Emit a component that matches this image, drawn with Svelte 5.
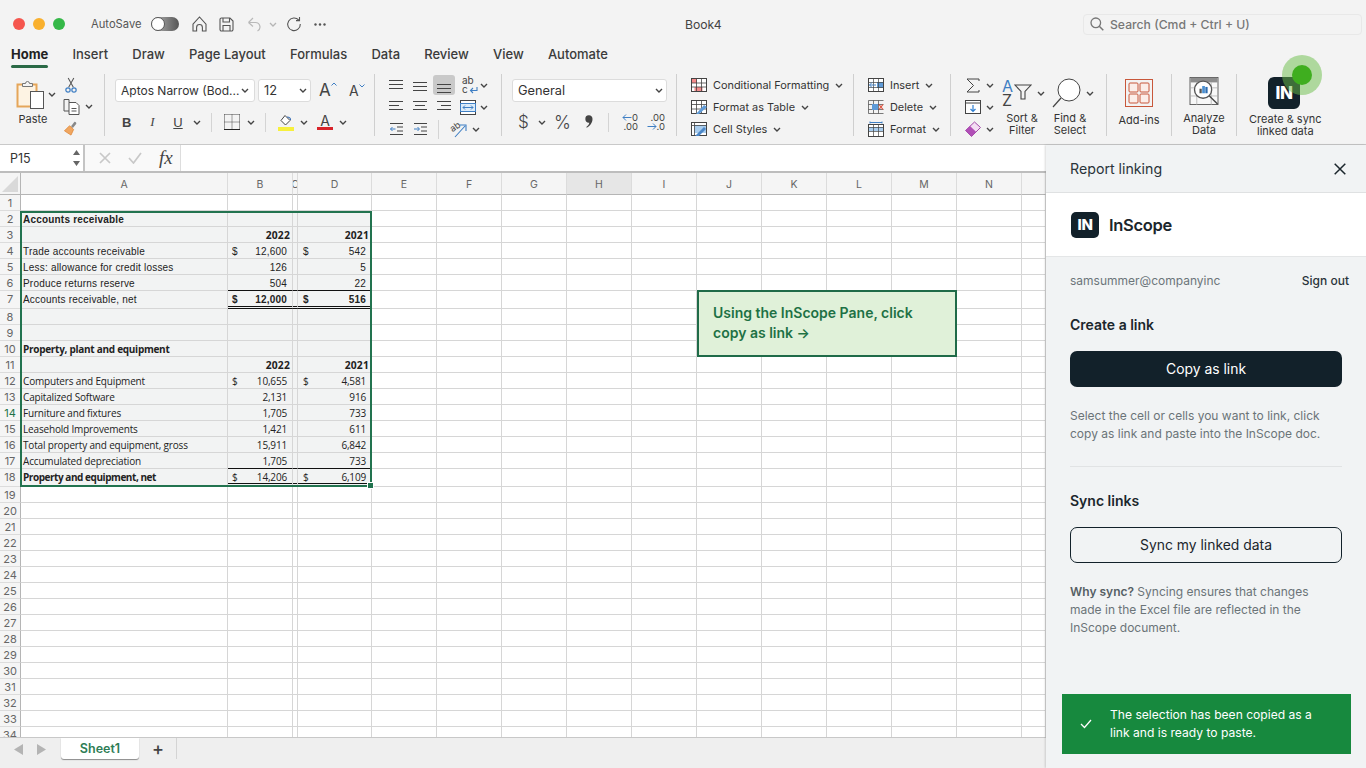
<script>
  const columns = [
    { id: 'A' }, { id: 'B' }, { id: 'C' }, { id: 'D' }, { id: 'E' }, { id: 'F' }, { id: 'G' }, { id: 'H' },
    { id: 'I' }, { id: 'J' }, { id: 'K' }, { id: 'L' }, { id: 'M' }, { id: 'N' }, { id: '' }
  ];

  const rows = Array.from({ length: 34 }, (_, i) => i + 1);

  // spreadsheet content, keyed by row number
  const sheet = {
    2: { a: 'Accounts receivable', bold: true },
    3: { b: '2022', d: '2021', year: true },
    4: { a: 'Trade accounts receivable', bs: '$', b: '12,600', ds: '$', d: '542' },
    5: { a: 'Less: allowance for credit losses', b: '126', d: '5' },
    6: { a: 'Produce returns reserve', b: '504', d: '22', under: true },
    7: { a: 'Accounts receivable, net', bs: '$', b: '12,000', ds: '$', d: '516', boldNums: true, dbl: true },
    10: { a: 'Property, plant and equipment', bold: true, alt: true },
    11: { b: '2022', d: '2021', year: true },
    12: { a: 'Computers and Equipment', bs: '$', b: '10,655', ds: '$', d: '4,581', alt: true },
    13: { a: 'Capitalized Software', b: '2,131', d: '916', alt: true },
    14: { a: 'Furniture and fixtures', b: '1,705', d: '733', alt: true },
    15: { a: 'Leasehold Improvements', b: '1,421', d: '611', alt: true },
    16: { a: 'Total property and equipment, gross', b: '15,911', d: '6,842', alt: true },
    17: { a: 'Accumulated depreciation', b: '1,705', d: '733', alt: true, under: true },
    18: { a: 'Property and equipment, net', bold: true, tight: true, bs: '$', b: '14,206', ds: '$', d: '6,109', alt: true, lifted: true }
  };

  const isSelected = (r, c) => r >= 2 && r <= 18 && c !== '' && 'ABCD'.includes(c);
  const inAmounts = (c) => c !== '' && 'BCD'.includes(c);
</script>

{#snippet chev()}
  <svg class="chev" width="8" height="5" viewBox="0 0 8 5"><path d="M1 1l3 3 3-3" fill="none" stroke="#444" stroke-width="1.4" /></svg>
{/snippet}

{#snippet lines(a, b, c, xa = 1, xb = 1, xc = 1, wa = 14, wb = 14, wc = 14)}
  <svg width="16" height="18" viewBox="0 0 16 18">
    <path d="M{xa} {a}h{wa}M{xb} {b}h{wb}M{xc} {c}h{wc}" stroke="#444" stroke-width="1" fill="none" />
  </svg>
{/snippet}

<div class="window">
  <header class="titlebar">
    <div class="title-left">
      <div class="lights">
        <span class="light red"></span>
        <span class="light amber"></span>
        <span class="light green"></span>
      </div>
      <span class="autosave">AutoSave</span>
      <span class="toggle"><span class="knob"></span></span>
      <svg class="qa home" width="15" height="16" viewBox="0 0 15 16"><path d="M1 8.2 7.5 1 14 8.2V15h-3.6v-3.6a2.9 2.9 0 0 0-5.8 0V15H1z" fill="none" stroke="#555" stroke-width="1.1" /></svg>
      <svg class="qa save" width="15" height="15" viewBox="0 0 15 15"><path d="M2.5 1h8.5L14 4v8.5a1.500 1.500 0 0 1-1.500 1.500h-10A1.500 1.500 0 0 1 1 12.500v-10A1.500 1.500 0 0 1 2.500 1zM4 1v4h6.500V1M4 14V8.500h7V14" fill="none" stroke="#555" stroke-width="1.1" /></svg>
      <svg class="qa undo" width="15" height="15" viewBox="0 0 15 15"><path d="M1.5 5.500 6 1M1.500 5.500 6 9.500M1.500 5.500h7a4.500 4.500 0 0 1 2 8.500" fill="none" stroke="#b9b9b9" stroke-width="1.2" /></svg>
      <svg class="qa undo-more" width="8" height="5" viewBox="0 0 8 5"><path d="M1 1l3 3 3-3" fill="none" stroke="#b5b5b5" stroke-width="1.3" /></svg>
      <svg class="qa redo" width="16" height="16" viewBox="0 0 16 16"><path d="M12.8 4.200A6.300 6.300 0 1 0 14.300 8M13.500 1v3.600H10" fill="none" stroke="#555" stroke-width="1.1" /></svg>
      <svg class="qa more" width="12" height="3" viewBox="0 0 12 3"><circle cx="1.500" cy="1.500" r="1.200" fill="#555" /><circle cx="6" cy="1.500" r="1.200" fill="#555" /><circle cx="10.500" cy="1.500" r="1.200" fill="#555" /></svg>
    </div>
    <div class="doc-title">Book4</div>
    <div class="search">
      <svg width="14" height="14" viewBox="0 0 14 14"><circle cx="5.800" cy="5.800" r="4.800" fill="none" stroke="#777" stroke-width="1.3" /><path d="M9.300 9.300 13.300 13.300" stroke="#777" stroke-width="1.5" /></svg>
      <span>Search (Cmd + Ctrl + U)</span>
    </div>
  </header>

  <nav class="tabs">
    <span class="tab active">Home</span>
    <span class="tab">Insert</span>
    <span class="tab">Draw</span>
    <span class="tab">Page Layout</span>
    <span class="tab">Formulas</span>
    <span class="tab">Data</span>
    <span class="tab">Review</span>
    <span class="tab">View</span>
    <span class="tab">Automate</span>
  </nav>

  <section class="ribbon">
    <!-- clipboard -->
    <div class="group g-paste">
      <div class="paste-col">
        <div class="paste-top">
          <svg width="29" height="29" viewBox="0 0 29 29">
            <rect x="1.500" y="4.500" width="19" height="22" fill="#fdf3e3" stroke="#e5a65a" stroke-width="2" />
            <path d="M6.500 6.500V3.500h3a2 2 0 0 1 4 0h3v3z" fill="#f4f4f4" stroke="#777" stroke-width="1" />
            <rect x="14.500" y="11.500" width="13" height="17" fill="#fff" stroke="#555" stroke-width="1" />
          </svg>
          {@render chev()}
        </div>
        <span class="label paste-label">Paste</span>
      </div>
      <div class="paste-tools">
        <svg width="12" height="17" viewBox="0 0 12 17"><path d="M3 1l5.500 10M9 1 3.500 11" stroke="#555" stroke-width="1.1" fill="none" /><circle cx="2.800" cy="13.800" r="2.300" fill="none" stroke="#3f7fc4" stroke-width="1.3" /><circle cx="9.200" cy="13.800" r="2.300" fill="none" stroke="#3f7fc4" stroke-width="1.3" /></svg>
        <div class="tool-row">
          <svg width="17" height="16" viewBox="0 0 17 16"><path d="M6 3.500V.5h-5V12h5" fill="none" stroke="#555" /><path d="M6 3.500h7l3 3v9H6zM8.500 9.500h5M8.500 12h5" fill="#fff" stroke="#555" /></svg>
          {@render chev()}
        </div>
        <svg width="16" height="16" viewBox="0 0 16 16"><path d="M8 5.500 11.500 1c.8-.8 2.800 1 2 2.200L10 7.500z" fill="#888" /><path d="M6.500 5 10.800 9 8 15 1 10.500z" fill="#f0a660" stroke="#dd8433" stroke-width=".8" /></svg>
      </div>
    </div>

    <!-- font -->
    <div class="group g-font">
      <div class="font-top">
        <div class="select font-name"><span>Aptos Narrow (Bod...</span>{@render chev()}</div>
        <div class="select font-size"><span>12</span>{@render chev()}</div>
        <span class="grow-a big">A<svg width="6" height="4" viewBox="0 0 6 4"><path d="M.5 3.500 3 1l2.500 2.500" fill="none" stroke="#3f7fc4" /></svg></span>
        <span class="grow-a small">A<svg width="6" height="4" viewBox="0 0 6 4"><path d="M.5.500 3 3 5.500.500" fill="none" stroke="#3f7fc4" /></svg></span>
      </div>
      <div class="font-bottom">
        <span class="fmt b">B</span>
        <span class="fmt i">I</span>
        <span class="fmt u">U</span>
        {@render chev()}
        <span class="vsep s1"></span>
        <svg class="border-ic" width="16" height="16" viewBox="0 0 16 16"><path d="M.5.500h15M.5 8h15M.5.500v15M15.500.500v15M8 .500v15" stroke="#444" stroke-dasharray="1 1" fill="none" /><path d="M0 15.500h16" stroke="#222" /></svg>
        {@render chev()}
        <span class="vsep s2"></span>
        <svg class="fill-ic" width="16" height="17" viewBox="0 0 16 17"><path d="M7 1.500 12 6.500 7.500 11 3 6.500z" fill="#fff" stroke="#444" /><path d="M9 3c2 0 3.500 1 3.500 3" fill="none" stroke="#3a6fb5" stroke-width="1.2" /><rect y="13" width="16" height="4" fill="#f7f03c" /></svg>
        {@render chev()}
        <span class="color-a">A</span>
        {@render chev()}
      </div>
    </div>

    <!-- alignment -->
    <div class="group g-align">
      <div class="row">
        <span class="ic">{@render lines(4.5, 8.5, 12.5)}</span>
        <span class="ic">{@render lines(6.5, 10.5, 14.5)}</span>
        <span class="ic on">{@render lines(8.5, 12.5, 16.5)}</span>
        <span class="ic wrap-ab">
          <span class="wrap-t">ab</span>
          <span class="wrap-b">c<svg width="9" height="7" viewBox="0 0 9 7"><path d="M8 0v3.500H2M4 1 1.500 3.500 4 6" fill="none" stroke="#3f7fc4" stroke-width="1.1" /></svg></span>
        </span>
        {@render chev()}
      </div>
      <div class="row">
        <span class="ic">{@render lines(3.5, 7.5, 11.5, 1, 1, 1, 14, 10, 14)}</span>
        <span class="ic">{@render lines(3.5, 7.5, 11.5, 1, 3, 1, 14, 10, 14)}</span>
        <span class="ic">{@render lines(3.5, 7.5, 11.5, 1, 5, 1, 14, 10, 14)}</span>
        <span class="ic">
          <svg width="16" height="15" viewBox="0 0 16 15"><rect x=".5" y=".5" width="15" height="14" fill="#fff" stroke="#444" /><rect x=".5" y="3.500" width="15" height="8" fill="#dcebf8" stroke="#3f7fc4" /><path d="M3 7.500h10M5 5.500l-2 2 2 2M11 5.500l2 2-2 2" fill="none" stroke="#3f7fc4" /></svg>
        </span>
        {@render chev()}
      </div>
      <div class="row">
        <span class="ic">
          <svg width="15" height="14" viewBox="0 0 15 14"><path d="M1 1.500h13M8 5h6M8 9h6M1 12.500h13" stroke="#444" fill="none" /><path d="M6.500 7H1.500M3.500 5l-2 2 2 2" stroke="#3f7fc4" fill="none" /></svg>
        </span>
        <span class="ic">
          <svg width="15" height="14" viewBox="0 0 15 14"><path d="M1 1.500h13M8 5h6M8 9h6M1 12.500h13" stroke="#444" fill="none" /><path d="M1 7h5M4.500 5l2 2-2 2" stroke="#3f7fc4" fill="none" /></svg>
        </span>
        <span class="vsep s3"></span>
        <svg class="orient" width="20" height="18" viewBox="0 0 20 18"><text x="1" y="10" transform="rotate(-35 6 7)" class="orient-t">ab</text><path d="M6 17 16 6M11 5h6v6" fill="none" stroke="#3f7fc4" stroke-width="1.1" /></svg>
        {@render chev()}
      </div>
    </div>

    <!-- number -->
    <div class="group g-number">
      <div class="select general"><span>General</span>{@render chev()}</div>
      <div class="num-row">
        <span class="dollar-ic">$</span>
        {@render chev()}
        <span class="pct">%</span>
        <svg class="comma" width="8" height="13" viewBox="0 0 8 13"><path d="M3.800.3a3.500 3.500 0 0 1 3.700 3.700c0 3.800-2.700 7-5.700 8.700l-.5-.8c1.700-1.100 2.800-2.600 3-4.200A3.500 3.500 0 1 1 3.800.3z" fill="#444" /></svg>
        <span class="vsep s4"></span>
        <span class="dec">
          <span class="dec-top"><svg width="10" height="7" viewBox="0 0 10 7"><path d="M9.500 3.500H1M4 .5l-3 3 3 3" fill="none" stroke="#3f7fc4" /></svg>0</span>
          <span>.00</span>
        </span>
        <span class="dec dec2">
          <span>.00</span>
          <span class="dec-top"><svg width="10" height="7" viewBox="0 0 10 7"><path d="M.5 3.500H9M6 .5l3 3-3 3" fill="none" stroke="#3f7fc4" /></svg>.0</span>
        </span>
      </div>
    </div>

    <!-- styles -->
    <div class="group g-styles">
      <div class="row">
        <svg width="16" height="14" viewBox="0 0 16 14"><rect x=".5" y=".5" width="15" height="13" fill="#fff" stroke="#444" /><rect x="3.500" y="9" width="8" height="4" fill="#f48b8b" /><rect x="1" y="1" width="5" height="4" fill="#f48b8b" /><path d="M.5 5h15M.5 9h15M5.500.5v13M10.500.5v13" stroke="#444" stroke-width=".8" /></svg>
        <span class="cmd">Conditional Formatting</span>{@render chev()}
      </div>
      <div class="row">
        <svg width="16" height="14" viewBox="0 0 16 14"><rect x=".5" y=".5" width="15" height="13" fill="#fff" stroke="#444" /><path d="M.5 4.500h15M.5 9h15M5.500.5v13M10.500.5v13" stroke="#444" stroke-width=".8" /><path d="M5 14 13 5l3 2-8 7z" fill="#5f9bd8" /></svg>
        <span class="cmd">Format as Table</span>{@render chev()}
      </div>
      <div class="row">
        <svg width="16" height="14" viewBox="0 0 16 14"><rect x=".5" y=".5" width="15" height="13" fill="#fff" stroke="#444" /><rect x="3" y="3" width="12" height="8" fill="#a9cdee" /><path d="M.5 3.500h15M3.500.5v13" stroke="#444" stroke-width=".8" /><path d="M4 14 13 5l2 2-7 7z" fill="#4d88c8" /></svg>
        <span class="cmd">Cell Styles</span>{@render chev()}
      </div>
    </div>

    <!-- cells -->
    <div class="group g-cells">
      <div class="row">
        <svg width="16" height="14" viewBox="0 0 16 14"><rect x=".5" y=".5" width="15" height="13" fill="#fff" stroke="#444" /><rect x="9" y="4" width="6" height="6" fill="#5f9bd8" /><path d="M.5 4.500h15M.5 9.500h15M5.500.5v13M10.500.5v13" stroke="#444" stroke-width=".7" /><path d="M8 7H1.500M4 4.500 1.500 7 4 9.500" fill="none" stroke="#3f7fc4" /></svg>
        <span class="cmd">Insert</span>{@render chev()}
      </div>
      <div class="row">
        <svg width="16" height="14" viewBox="0 0 16 14"><path d="M.5.5h15M.5 13.500h15M5.500.5v13M10.500.5v13M.5 4.500h15M.5 9.500h15M.5.5v13" stroke="#444" stroke-width=".7" fill="none" /><rect x="4" y="4" width="6" height="6" fill="#5f9bd8" /><path d="M11 4.500l4 5M15 4.500l-4 5" stroke="#e0503c" stroke-width="1.2" /></svg>
        <span class="cmd">Delete</span>{@render chev()}
      </div>
      <div class="row">
        <svg width="16" height="16" viewBox="0 0 16 16"><rect x=".5" y="3.500" width="15" height="12" fill="#fff" stroke="#444" /><rect x="1" y="6" width="14" height="4" fill="#a9cdee" /><path d="M.5 6.500h15M.5 10.500h15M5.500 3.500v12M10.500 3.500v12" stroke="#444" stroke-width=".7" /><path d="M2 .5v2M14 .5v2M2 1.500h12" stroke="#3f7fc4" /></svg>
        <span class="cmd">Format</span>{@render chev()}
      </div>
    </div>

    <!-- editing -->
    <div class="group g-edit">
      <div class="edit-col">
        <div class="row">
          <svg width="16" height="15" viewBox="0 0 16 15"><path d="M14 3V1H2l6.500 6.500L2 14h12v-2" fill="none" stroke="#444" stroke-width="1" /></svg>
          {@render chev()}
        </div>
        <div class="row">
          <svg width="16" height="14" viewBox="0 0 16 14"><rect x=".5" y=".5" width="15" height="13" fill="#fff" stroke="#444" /><path d="M.5 3h15" stroke="#444" /><path d="M8 5v6.500M5.500 9 8 11.500 10.500 9" fill="none" stroke="#2f7fd0" stroke-width="1.2" /></svg>
          {@render chev()}
        </div>
        <div class="row">
          <svg width="16" height="16" viewBox="0 0 16 16"><path d="M9.500 1 15.500 6.500 6.500 15.500.5 9.500z" fill="#f3ddf3" stroke="#a348a8" /><path d="M.5 9.500 5 5l6 5.800-4.500 4.700z" fill="#b04fb6" /></svg>
          {@render chev()}
        </div>
      </div>
      <div class="big-cmd sort">
        <div class="big-top">
          <span class="az"><span class="az-a">A</span><span class="az-z">Z</span></span>
          <svg width="18" height="16" viewBox="0 0 18 16"><path d="M1 1h16l-6 6.500V15H7V7.500z" fill="none" stroke="#444" stroke-width="1.1" /></svg>
          {@render chev()}
        </div>
        <span class="label">Sort &amp;<br />Filter</span>
      </div>
      <div class="big-cmd find">
        <div class="big-top">
          <svg width="29" height="30" viewBox="0 0 29 30"><circle cx="17" cy="12" r="11" fill="#fff" stroke="#444" /><path d="M9 20 1 29" stroke="#444" stroke-width="1.2" /></svg>
          {@render chev()}
        </div>
        <span class="label">Find &amp;<br />Select</span>
      </div>
    </div>

    <div class="group g-single addins">
      <svg width="28" height="28" viewBox="0 0 28 28"><rect x=".5" y=".5" width="27" height="27" fill="none" stroke="#c8573a" /><rect x="4" y="4" width="9" height="9" rx="1" fill="#fbeee9" stroke="#c8573a" /><rect x="15" y="4" width="9" height="9" rx="1" fill="#fbeee9" stroke="#c8573a" /><rect x="4" y="15" width="9" height="9" rx="1" fill="#fbeee9" stroke="#c8573a" /><rect x="15" y="15" width="9" height="9" rx="1" fill="#fbeee9" stroke="#c8573a" /></svg>
      <span class="label">Add-ins</span>
    </div>

    <div class="group g-single analyze">
      <svg width="32" height="31" viewBox="0 0 32 31">
        <rect x=".5" y=".5" width="31" height="30" fill="#f8f8f8" stroke="#555" />
        <rect x="1" y="1" width="30" height="5" fill="#8d8d8d" />
        <path d="M.5 12h31M.5 21h31M8 6v25M24 6v25" stroke="#aaa" stroke-width=".8" />
        <circle cx="15" cy="14" r="9.500" fill="#fff" stroke="#555" stroke-width="1.5" />
        <rect x="11" y="13" width="2.500" height="5" fill="#555" />
        <rect x="14" y="10" width="3" height="8" fill="#4a90d2" />
        <rect x="17.500" y="11" width="2.500" height="7" fill="#2d6cb0" />
        <path d="M22 21 31 30" stroke="#444" stroke-width="1.5" />
      </svg>
      <span class="label">Analyze<br />Data</span>
    </div>

    <div class="group g-single create">
      <span class="in-mark">IN</span>
      <span class="label">Create &amp; sync<br />linked data</span>
      <span class="pulse"><span class="pulse-dot"></span></span>
    </div>
  </section>

  <div class="workspace">
    <div class="book">
      <div class="formula">
        <div class="namebox">
          <span>P15</span>
          <svg width="7" height="16" viewBox="0 0 7 16"><path d="M3.500 0 7 5H0zM3.500 16 7 11H0z" fill="#666" /></svg>
        </div>
        <div class="formula-btns">
          <svg width="12" height="12" viewBox="0 0 12 12"><path d="M1 1l10 10M11 1 1 11" stroke="#c8c8c8" stroke-width="1.7" /></svg>
          <svg width="14" height="12" viewBox="0 0 14 12"><path d="M1 6l4.500 5L13 1" fill="none" stroke="#c8c8c8" stroke-width="1.7" /></svg>
          <span class="fx">fx</span>
        </div>
        <div class="formula-input"></div>
      </div>

      <div class="grid-wrap">
        <div class="sheet">
          <div class="corner"><svg width="16" height="16" viewBox="0 0 16 16"><path d="M16 0V16H0z" fill="#d9d9d9" /></svg></div>
          {#each columns as col}
            <div class="col-head" class:active={col.id === 'H'}>{col.id}</div>
          {/each}

          {#each rows as r}
            {@const d = sheet[r] ?? {}}
            <div class="row-head" class:active={r === 14}>{r}</div>
            {#each columns as col}
              <div
                class="cell"
                class:sel={isSelected(r, col.id)}
                class:alt={d.alt}
                class:under={d.under && inAmounts(col.id)}
                class:dbl={d.dbl && inAmounts(col.id)}
                class:lifted={d.lifted && inAmounts(col.id)}
              >
                {#if col.id === 'A' && d.a}
                  <span class:strong={d.bold} class:tight={d.tight}>{d.a}</span>
                {:else if col.id === 'B' && d.b}
                  <span class="amount b-pad" class:year={d.year} class:strong={d.boldNums}><span>{d.bs ?? ''}</span><span>{d.b}</span></span>
                {:else if col.id === 'D' && d.d}
                  <span class="amount d-pad" class:year={d.year} class:strong={d.boldNums}><span>{d.ds ?? ''}</span><span>{d.d}</span></span>
                {/if}
              </div>
            {/each}
          {/each}
        </div>
        <div class="selection"><span class="handle"></span></div>
        <div class="callout">Using the InScope Pane, click copy as link →</div>
      </div>

      <footer class="sheet-tabs">
        <svg width="9" height="11" viewBox="0 0 9 11"><path d="M9 0v11L0 5.500z" fill="#b4b4b4" /></svg>
        <svg class="next" width="9" height="11" viewBox="0 0 9 11"><path d="M0 0v11l9-5.500z" fill="#b4b4b4" /></svg>
        <div class="sheet-tab">Sheet1</div>
        <span class="plus">+</span>
        <span class="tab-sep"></span>
      </footer>
    </div>

    <aside class="pane">
      <div class="pane-head">
        <span>Report linking</span>
        <svg width="12" height="12" viewBox="0 0 12 12"><path d="M.7.7l10.600 10.600M11.300.7.700 11.300" stroke="#1b262c" stroke-width="1.5" /></svg>
      </div>
      <div class="brand">
        <span class="brand-mark">IN</span>
        <span class="brand-name">InScope</span>
      </div>
      <div class="pane-body">
        <div class="account">
          <span class="email">samsummer@companyinc</span>
          <span class="signout">Sign out</span>
        </div>
        <h2 class="create-h">Create a link</h2>
        <button class="btn primary">Copy as link</button>
        <p class="hint">Select the cell or cells you want to link, click copy as link and paste into the InScope doc.</p>
        <hr />
        <h2 class="sync-h">Sync links</h2>
        <button class="btn outline">Sync my linked data</button>
        <p class="hint"><b>Why sync?</b> Syncing ensures that changes made in the Excel file are reflected in the InScope document.</p>
      </div>
      <div class="toast">
        <svg width="12" height="10" viewBox="0 0 12 10"><path d="M1 5l3.500 3.500L11 1" fill="none" stroke="#fff" stroke-width="1.3" /></svg>
        <span>The selection has been copied as a link and is ready to paste.</span>
      </div>
    </aside>
  </div>
</div>

<style>
  :global(body) {
    margin: 0;
    overflow: hidden;
    background: #f3f3f3;
  }

  .window {
    width: 1366px;
    height: 768px;
    overflow: hidden;
    display: flex;
    flex-direction: column;
    font-family: Inter, 'Liberation Sans', sans-serif;
    color: #333;
    background: #f3f3f3;
  }

  /* title bar */
  .titlebar {
    height: 48px;
    flex: none;
    display: flex;
    align-items: center;
  }

  .title-left {
    width: 685px;
    display: flex;
    align-items: center;
    padding-left: 13px;
    box-sizing: border-box;
  }

  .lights {
    display: flex;
    gap: 8px;
  }

  .light {
    width: 12px;
    height: 12px;
    border-radius: 50%;
  }

  .red { background: #f5564e; }
  .amber { background: #f9b02e; }
  .green { background: #35b848; }

  .autosave {
    margin-left: 26px;
    width: 50px;
    font-size: 11.2px;
    white-space: nowrap;
    color: #555;
  }

  .toggle {
    margin-left: 10px;
    width: 28px;
    height: 14px;
    border-radius: 7px;
    background: linear-gradient(90deg, #bbb, #555);
    position: relative;
  }

  .knob {
    position: absolute;
    left: 0;
    top: 0;
    width: 12px;
    height: 12px;
    border: 1px solid #555;
    border-radius: 50%;
    background: #fff;
  }

  .home { margin-left: 13px; }
  .save { margin-left: 12px; }
  .undo { margin-left: 13px; }
  .undo-more { margin-left: 7px; }
  .redo { margin-left: 9px; }
  .more { margin-left: 12px; }

  .doc-title {
    flex: 1;
    font-size: 12.2px;
    color: #444;
  }

  .search {
    width: 279px;
    height: 21px;
    margin-right: 4px;
    box-sizing: border-box;
    border: 1px solid #e8e8e8;
    border-radius: 4px;
    display: flex;
    align-items: center;
    gap: 6px;
    padding-left: 6px;
    font-size: 12.2px;
    font-weight: 500;
    color: #777;
  }

  /* tabs */
  .tabs {
    height: 22px;
    flex: none;
    display: flex;
    gap: 24.2px;
    padding-left: 11px;
    font-size: 13px;
    font-weight: 500;
    color: #3b3b3b;
  }

  .tab {
    line-height: 13px;
    position: relative;
  }

  .tab.active {
    font-weight: 700;
    color: #222;
  }

  .tab.active::after {
    content: '';
    position: absolute;
    left: 0;
    right: 0;
    top: 17px;
    height: 3px;
    border-radius: 2px;
    background: #2b6a46;
  }

  /* ribbon */
  .ribbon {
    height: 75px;
    flex: none;
    display: flex;
    position: relative;
    box-sizing: border-box;
    border-bottom: 1px solid #c9c9c9;
    padding-top: 4px;
  }

  .group {
    position: relative;
    box-sizing: border-box;
    height: 62px;
    flex: none;
    border-right: 1px solid #cfcfcf;
  }

  .label {
    font-size: 11px;
    line-height: 12px;
    text-align: center;
    color: #333;
  }

  .row {
    display: flex;
    align-items: center;
    height: 22px;
  }

  .ic {
    width: 24px;
    height: 20px;
    display: flex;
    align-items: center;
    justify-content: center;
    box-sizing: border-box;
  }

  .ic.on {
    background: #c9c9c9;
    border-radius: 3px;
    width: 22px;
    margin: 0 1px;
  }

  .vsep {
    width: 1px;
    height: 19px;
    background: #d4d4d4;
    flex: none;
  }

  .select {
    height: 23px;
    box-sizing: border-box;
    background: #fff;
    border: 1px solid #dcdcdc;
    border-radius: 3px;
    display: flex;
    align-items: center;
    justify-content: space-between;
    padding: 0 3px 0 5px;
    font-size: 12.8px;
    color: #333;
    white-space: nowrap;
  }

  .g-paste {
    width: 105px;
    display: flex;
    padding-left: 16px;
  }

  .paste-col {
    width: 46px;
    display: flex;
    flex-direction: column;
    padding-top: 6px;
  }

  .paste-top {
    display: flex;
    align-items: center;
    gap: 3px;
    height: 29px;
  }

  .paste-label {
    margin-top: 4px;
    width: 34px;
  }

  .paste-tools {
    display: flex;
    flex-direction: column;
    padding-top: 3px;
    gap: 6px;
    margin-left: 1px;
  }

  .paste-tools > svg:first-child {
    margin-left: 2px;
  }

  .tool-row {
    display: flex;
    align-items: center;
    gap: 5px;
  }

  .g-font {
    width: 270px;
    padding: 5px 0 0 10px;
  }

  .font-top {
    display: flex;
    align-items: center;
    gap: 3px;
  }

  .font-name {
    width: 140px;
    font-size: 12px;
    padding-right: 5px;
  }

  .font-size {
    width: 53px;
  }

  .grow-a {
    display: flex;
    color: #444;
    line-height: 1;
  }

  .grow-a.big {
    margin-left: 5px;
    font-size: 17px;
    width: 24px;
  }

  .grow-a.small {
    margin-left: 3px;
    font-size: 14px;
    align-items: flex-start;
  }

  .font-bottom {
    display: flex;
    align-items: center;
    height: 22px;
    margin-top: 9px;
  }

  .fmt {
    font-size: 13px;
    color: #444;
    font-family: 'Liberation Serif', serif;
    text-align: center;
  }

  .b {
    font-family: 'Liberation Sans', sans-serif;
    font-weight: 700;
    margin-left: 7px;
    width: 9px;
  }

  .i {
    font-style: italic;
    margin-left: 17px;
    width: 9px;
  }

  .u {
    font-family: 'Liberation Sans', sans-serif;
    text-decoration: underline;
    margin-left: 16px;
    width: 10px;
    margin-right: 10px;
  }

  .s1 { margin: 0 12px 0 10px; }
  .border-ic { margin-right: 7px; }
  .s2 { margin: 0 12px 0 10px; }
  .fill-ic { margin-right: 6px; }

  .color-a {
    margin-left: 9px;
    width: 16px;
    margin-right: 6px;
    text-align: center;
    font-size: 14px;
    line-height: 13px;
    border-bottom: 3px solid #d8232a;
    color: #444;
  }

  .g-align {
    width: 127px;
    padding-left: 9px;
  }

  .wrap-ab {
    flex-direction: column;
    align-items: flex-start;
    padding-left: 6px;
    font-size: 10px;
    line-height: 9px;
    color: #444;
  }

  .wrap-b {
    display: flex;
    align-items: flex-end;
    gap: 1px;
  }

  .s3 {
    margin: 0 0 0 6px;
  }

  .orient {
    margin: 0 3px 0 10px;
  }

  .orient-t {
    font-size: 9px;
    fill: #444;
    font-family: Inter, sans-serif;
  }

  .g-number {
    width: 175px;
    padding: 5px 0 0 10px;
  }

  .general {
    width: 155px;
  }

  .num-row {
    display: flex;
    align-items: center;
    height: 22px;
    margin-top: 9px;
    color: #444;
  }

  .dollar-ic {
    margin-left: 6px;
    font-size: 17px;
    width: 10px;
    margin-right: 10px;
    font-weight: 300;
  }

  .pct {
    margin-left: 8px;
    font-size: 18px;
    font-weight: 300;
    width: 18px;
  }

  .comma {
    margin-left: 13px;
    margin-top: -2px;
    flex: none;
  }

  .s4 {
    margin-left: 15px;
  }

  .dec {
    display: flex;
    flex-direction: column;
    align-items: flex-end;
    font-size: 9.5px;
    line-height: 9px;
    width: 16px;
    margin-left: 13px;
    color: #444;
  }

  .dec2 {
    margin-left: 11px;
  }

  .dec-top {
    display: flex;
    align-items: center;
  }

  .g-styles {
    width: 177px;
    padding-left: 14px;
  }

  .cmd {
    font-size: 10.9px;
    margin: 0 6px;
    color: #333;
  }

  .g-cells {
    width: 97px;
    padding-left: 14px;
  }

  .g-edit {
    width: 156px;
    padding-left: 14px;
    display: flex;
  }

  .edit-col {
    width: 37px;
  }

  .edit-col .row {
    gap: 5px;
  }

  .big-cmd {
    display: flex;
    flex-direction: column;
  }

  .big-top {
    display: flex;
    align-items: center;
    height: 36px;
    padding-top: 4px;
    box-sizing: border-box;
  }

  .sort {
    width: 50px;
  }

  .sort .label {
    width: 38px;
    margin-left: 1px;
    margin-top: 4px;
  }

  .sort .big-top svg:first-of-type {
    margin-right: 5px;
    margin-top: -3px;
  }

  .az {
    display: flex;
    flex-direction: column;
    width: 12px;
    font-size: 16px;
    line-height: 14px;
    color: #444;
  }

  .az-a {
    color: #3f7fc4;
  }

  .find {
    width: 50px;
  }

  .find .big-top {
    gap: 5px;
  }

  .find .label {
    width: 36px;
    margin-top: 4px;
  }

  .g-single {
    display: flex;
    flex-direction: column;
    align-items: center;
    padding-top: 5px;
  }

  .g-single .label {
    margin-top: 7px;
  }

  .addins {
    width: 65px;
  }

  .analyze {
    width: 65px;
    padding-top: 3px;
  }

  .analyze .label {
    margin-top: 7px;
  }

  .create {
    flex: 1;
    border-right: 0;
    padding-top: 3px;
    width: 95px;
    align-items: flex-start;
    padding-left: 12px;
  }

  .create .label {
    margin-top: 4px;
  }

  .in-mark {
    width: 32px;
    height: 32px;
    margin-left: 19px;
    border-radius: 6px;
    background: #12212a;
    color: #fff;
    font-weight: 800;
    font-size: 17px;
    line-height: 32px;
    text-align: center;
    letter-spacing: -0.5px;
  }

  .pulse {
    position: absolute;
    left: 45px;
    top: -19px;
    width: 40px;
    height: 40px;
    border-radius: 50%;
    background: rgba(106, 190, 72, 0.5);
    display: flex;
    align-items: center;
    justify-content: center;
  }

  .pulse-dot {
    width: 20px;
    height: 20px;
    border-radius: 50%;
    background: #3fae1f;
  }

  /* workspace */
  .workspace {
    flex: 1;
    display: flex;
    min-height: 0;
  }

  .book {
    width: 1046px;
    flex: none;
    display: flex;
    flex-direction: column;
  }

  .formula {
    height: 28px;
    flex: none;
    box-sizing: border-box;
    display: flex;
    background: #fff;
    border-bottom: 2px solid #bdbdbd;
  }

  .namebox {
    width: 85px;
    box-sizing: border-box;
    padding: 0 3px 0 10px;
    display: flex;
    align-items: center;
    justify-content: space-between;
    font-size: 12.5px;
    border-right: 2px solid #c4c4c4;
  }

  .formula-btns {
    width: 96px;
    display: flex;
    align-items: center;
    padding-left: 14px;
    gap: 17px;
    box-sizing: border-box;
    border-right: 1px solid #ddd;
    background: #f9f9f9;
  }

  .fx {
    font-family: 'Liberation Serif', serif;
    font-style: italic;
    font-size: 19px;
    color: #444;
  }

  .formula-input {
    flex: 1;
  }

  .grid-wrap {
    flex: 1;
    position: relative;
    overflow: hidden;
    min-height: 0;
    background: #fff;
  }

  /* rows 7 and 18 are taller, they hold the total lines */
  .sheet {
    display: grid;
    grid-template-columns: 21px 207px 65px 5px 74px repeat(10, 65px) 24px;
    grid-template-rows: 22px repeat(6, 16px) 18px repeat(10, 16px) 18px;
    grid-auto-rows: 16px;
    color: #222;
  }

  .corner,
  .col-head,
  .row-head {
    background: #f5f5f5;
    box-sizing: border-box;
    color: #666;
    font-size: 10.5px;
    overflow: hidden;
    display: flex;
    justify-content: center;
    border-right: 1px solid #dcdcdc;
    border-bottom: 1px solid #b5b5b5;
  }

  .col-head {
    align-items: center;
    padding-top: 2px;
  }

  .corner {
    align-items: center;
    padding: 2px;
    border-right-color: #b5b5b5;
  }

  .row-head {
    border-right: 1px solid #b5b5b5;
    border-bottom: 1px solid #dcdcdc;
    font-size: 11px;
    line-height: 16px;
  }

  .col-head.active {
    background: #e6e6e6;
  }

  .row-head.active {
    color: #1e7145;
  }

  .cell {
    box-sizing: border-box;
    border-right: 1px solid #d6d6d6;
    border-bottom: 1px solid #d6d6d6;
    background: #fff;
    padding: 1px 0 0 2px;
    overflow: hidden;
    white-space: nowrap;
    line-height: 16px;
    font-family: 'Liberation Sans', sans-serif;
    font-size: 10px;
    letter-spacing: 0.2px;
  }

  .cell.sel {
    background: #f2f3f3;
  }

  .cell.alt {
    padding-top: 0;
    font-family: 'Open Sans', sans-serif;
    letter-spacing: -0.17px;
  }

  .cell.under {
    border-bottom-color: #111;
  }

  .cell.dbl {
    border-bottom: 3px double #111;
  }

  .cell.lifted {
    box-shadow: inset 0 -2px 0 #f2f3f3, inset 0 -3px 0 #111;
  }

  .strong {
    font-weight: 700;
  }

  .cell.alt .strong {
    letter-spacing: -0.28px;
  }

  .cell.alt .tight {
    letter-spacing: -0.45px;
  }

  .amount {
    display: flex;
    justify-content: space-between;
  }

  .b-pad {
    padding: 0 5px 0 2px;
  }

  .d-pad {
    padding: 0 5px 0 3px;
  }

  .amount.year {
    font-family: 'Open Sans', sans-serif;
    font-weight: 700;
    font-size: 10.3px;
    padding-right: 2px;
    margin-top: -1px;
  }

  .selection {
    position: absolute;
    left: 20px;
    top: 38px;
    width: 352px;
    height: 276px;
    box-sizing: border-box;
    border: 2px solid #22734f;
    pointer-events: none;
  }

  .handle {
    position: absolute;
    right: -4px;
    bottom: -4px;
    width: 7px;
    height: 7px;
    background: #22734f;
    border: 1px solid #fff;
    box-sizing: border-box;
  }

  .callout {
    position: absolute;
    left: 697px;
    top: 117px;
    width: 260px;
    height: 67px;
    box-sizing: border-box;
    border: 2px solid #1f6b48;
    background: #e0f1d9;
    padding: 11px 14px;
    font-size: 14px;
    line-height: 20px;
    font-weight: 600;
    color: #1e7145;
  }

  .sheet-tabs {
    height: 31px;
    flex: none;
    box-sizing: border-box;
    background: #efefef;
    border-top: 1px solid #c8c8c8;
    display: flex;
    align-items: flex-start;
    padding-left: 14px;
  }

  .sheet-tabs > svg {
    margin-top: 6px;
  }

  .next {
    margin-left: 14px;
  }

  .sheet-tab {
    margin-left: 15px;
    width: 78px;
    height: 21px;
    background: #fff;
    border-radius: 0 0 3px 3px;
    box-shadow: 0 1px 1px #8a8a8a;
    text-align: center;
    line-height: 21px;
    font-size: 12.5px;
    font-weight: 600;
    color: #2e7d55;
  }

  .plus {
    margin-left: 13px;
    font-size: 18px;
    line-height: 21px;
    font-weight: 500;
    color: #444;
    width: 12px;
    text-align: center;
  }

  .tab-sep {
    margin-left: 12px;
    width: 1px;
    height: 21px;
    background: #d4d4d4;
  }

  /* report linking pane */
  .pane {
    flex: 1;
    display: flex;
    flex-direction: column;
    background: #f1f3f4;
    box-shadow: -1px 0 2px rgba(0, 0, 0, 0.15);
    position: relative;
    color: #1b262c;
  }

  .pane-head {
    height: 48px;
    flex: none;
    box-sizing: border-box;
    border-bottom: 1px solid #dfe1e2;
    display: flex;
    align-items: center;
    justify-content: space-between;
    padding: 0 20px 0 24px;
    font-size: 14.2px;
    color: #2a343a;
  }

  .brand {
    height: 64px;
    flex: none;
    box-sizing: border-box;
    background: #fff;
    border-bottom: 1px solid #e4e6e7;
    display: flex;
    align-items: center;
    gap: 10px;
    padding: 0 0 0 25px;
  }

  .brand-mark {
    width: 28px;
    height: 26px;
    border-radius: 5px;
    background: #12212a;
    color: #fff;
    font-weight: 800;
    font-size: 15px;
    line-height: 26px;
    text-align: center;
    letter-spacing: -0.3px;
  }

  .brand-name {
    font-size: 16.5px;
    font-weight: 600;
    letter-spacing: -0.3px;
    color: #1b262c;
  }

  .pane-body {
    padding: 0 24px;
  }

  .account {
    display: flex;
    justify-content: space-between;
    align-items: center;
    height: 47px;
    padding-bottom: 1px;
    font-size: 12px;
    margin-right: -7px;
  }

  .email {
    color: #6c757a;
  }

  .signout {
    font-weight: 500;
    color: #2a343a;
  }

  h2 {
    font-size: 14px;
    font-weight: 600;
    margin: 0;
    line-height: 20px;
    color: #1b262c;
  }

  .create-h {
    margin-top: 10px;
  }

  .btn {
    display: block;
    width: 272px;
    height: 36px;
    border-radius: 7px;
    font-family: inherit;
    font-size: 13.9px;
    padding: 0 0 1px;
    box-sizing: border-box;
  }

  .primary {
    margin-top: 16px;
    background: #12212a;
    border: 0;
    color: #fff;
  }

  .outline {
    margin-top: 16px;
    background: transparent;
    border: 1px solid #12212a;
    color: #1b262c;
  }

  .hint {
    margin: 20px 0 0;
    font-size: 12px;
    line-height: 18px;
    color: #6b7478;
  }

  .hint b {
    font-weight: 600;
    color: #565f64;
  }

  hr {
    margin: 23px 0 0;
    border: 0;
    border-top: 1px solid #e1e3e4;
  }

  .sync-h {
    margin-top: 24px;
  }

  .toast {
    margin: auto 15px 14px 16px;
    height: 60px;
    flex: none;
    background: #17893e;
    color: #fff;
    display: flex;
    align-items: center;
    box-sizing: border-box;
    padding: 0 32px 0 18px;
    gap: 18px;
    font-size: 12.1px;
    line-height: 18px;
  }

  .toast svg {
    flex: none;
  }
</style>
